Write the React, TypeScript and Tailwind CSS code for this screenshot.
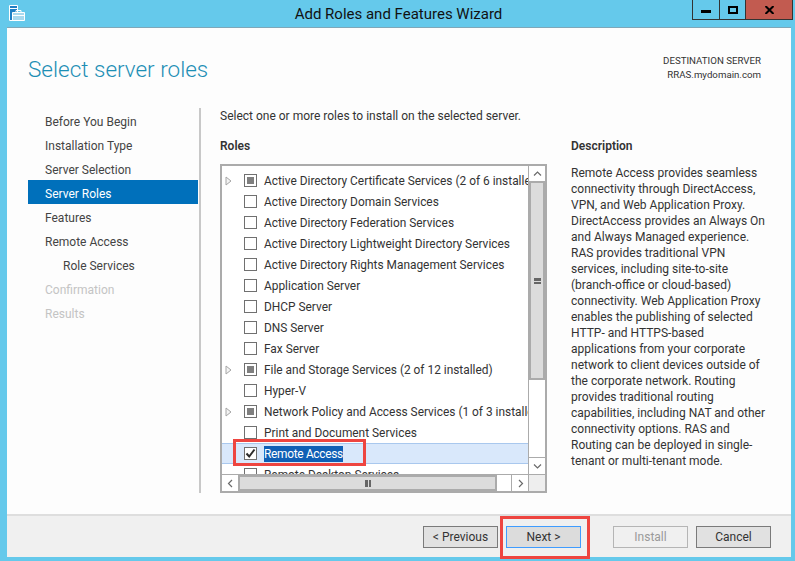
import { ReactNode } from "react"

const steps = [
  { label: "Before You Begin" },
  { label: "Installation Type" },
  { label: "Server Selection" },
  { label: "Server Roles", active: true },
  { label: "Features" },
  { label: "Remote Access" },
  { label: "Role Services", sub: true },
  { label: "Confirmation", off: true },
  { label: "Results", off: true },
]

const roles = [
  { label: "Active Directory Certificate Services (2 of 6 installed)", part: true },
  { label: "Active Directory Domain Services" },
  { label: "Active Directory Federation Services" },
  { label: "Active Directory Lightweight Directory Services" },
  { label: "Active Directory Rights Management Services" },
  { label: "Application Server" },
  { label: "DHCP Server" },
  { label: "DNS Server" },
  { label: "Fax Server" },
  { label: "File and Storage Services (2 of 12 installed)", part: true },
  { label: "Hyper-V" },
  { label: "Network Policy and Access Services (1 of 3 installed)", part: true },
  { label: "Print and Document Services" },
  { label: "Remote Access", on: true },
  { label: "Remote Desktop Services" },
]

const description = [
  "Remote Access provides seamless",
  "connectivity through DirectAccess,",
  "VPN, and Web Application Proxy.",
  "DirectAccess provides an Always On",
  "and Always Managed experience.",
  "RAS provides traditional VPN",
  "services, including site-to-site",
  "(branch-office or cloud-based)",
  "connectivity. Web Application Proxy",
  "enables the publishing of selected",
  "HTTP- and HTTPS-based",
  "applications from your corporate",
  "network to client devices outside of",
  "the corporate network. Routing",
  "provides traditional routing",
  "capabilities, including NAT and other",
  "connectivity options. RAS and",
  "Routing can be deployed in single-",
  "tenant or multi-tenant mode.",
]

function Chevron({ d }: { d: string }) {
  return (
    <svg width="9" height="9" viewBox="0 0 9 9" fill="none" stroke="#6a6a6a" strokeWidth="1.2">
      <path d={d} />
    </svg>
  )
}

function ScrollButton({ d, className }: { d: string; className: string }) {
  return (
    <div className={`flex items-center justify-center shrink-0 bg-white ${className}`}>
      <Chevron d={d} />
    </div>
  )
}

function Button({ children, className }: { children: ReactNode; className: string }) {
  return (
    <div className={`flex items-center justify-center h-[22px] w-[75px] border text-[12px] ${className}`}>
      {children}
    </div>
  )
}

function Row({ role }: { role: (typeof roles)[number] }) {
  return (
    <div
      className={`flex items-center h-[21px] shrink-0 ${
        role.on ? "bg-[#d9e8fb] border-y border-[#a9c8ee]" : ""
      }`}
    >
      <div className="flex items-center w-[22px] pl-[3px] shrink-0">
        {role.part && (
          <svg width="7" height="10" viewBox="0 0 7 10" fill="#f4f4f4" stroke="#a6a6a6">
            <path d="M1 1 L6 5 L1 9 Z" />
          </svg>
        )}
      </div>
      <div className="flex items-center justify-center w-[13px] h-[13px] border border-[#707070] bg-white shrink-0">
        {role.part && <div className="w-[7px] h-[7px] bg-[#7f7f7f]" />}
        {role.on && (
          <svg width="11" height="11" viewBox="0 0 11 11" fill="none" stroke="#2b2b2b" strokeWidth="2">
            <path d="M1.5 5.5 L4.2 8.5 L9.5 1.5" />
          </svg>
        )}
      </div>
      <span
        className={`ml-[7px] whitespace-nowrap text-[11.9px] leading-[16px] ${
          role.on ? "bg-[#0f5fb5] text-white tracking-[-0.3px]" : "text-[#333]"
        }`}
      >
        {role.label}
      </span>
    </div>
  )
}

export default function App() {
  return (
    <div
      className="relative flex flex-col w-[795px] h-[561px] bg-[#65c9eb] text-[#333] overflow-hidden"
      style={{ fontFamily: "Roboto, 'Open Sans', sans-serif" }}
    >
      {/* title bar */}
      <div className="relative flex items-start justify-center h-[28px] shrink-0 pl-[2px]">
        <svg className="absolute left-[9px] top-[5px]" width="16" height="16" viewBox="0 0 16 16" fill="none">
          <path d="M0.5 0.5 H8.5 V15.5 H0.5 Z" fill="#1f7fc4" stroke="#fff" />
          <path d="M1 3.5 H8" stroke="#fff" />
          <path d="M3.5 7.5 H15.5 V15.5 H3.5 Z" fill="#a9d9ee" stroke="#fff" />
          <path d="M7 7 V5.5 H12 V7 M3.5 10.5 H15.5" stroke="#fff" />
        </svg>
        <span className="mt-[5px] text-[15px] leading-[18px] text-[#111]">Add Roles and Features Wizard</span>
        <div className="absolute right-[2px] top-0 flex h-[20px] border border-t-0 border-[#333]">
          <div className="flex items-center justify-center w-[27px] border-r border-[#333]">
            <div className="w-[10px] h-[3px] mt-[4px] bg-black" />
          </div>
          <div className="flex items-center justify-center w-[26px] border-r border-[#333]">
            <div className="w-[10px] h-[8px] border-2 border-black" />
          </div>
          <div className="flex items-center justify-center w-[46px] bg-[#c25b50]">
            <svg width="9" height="8" viewBox="0 0 9 8" stroke="#000" strokeWidth="2">
              <path d="M0.5 0 L8.5 8 M8.5 0 L0.5 8" />
            </svg>
          </div>
        </div>
      </div>

      {/* window body */}
      <div className="flex flex-col flex-1 ml-[7px] mr-[4px] mb-[4px] bg-[#fdfdfd] shadow-[0_-1px_0_#7fa7b8]">
        {/* header */}
        <div className="flex justify-between h-[80px] shrink-0 pl-[21px] pr-[30px]">
          <h1 className="mt-[25px] text-[22.5px] leading-[32px] font-light text-[#1d8fb5]">Select server roles</h1>
          <div className="mt-[26px] text-right text-[9.7px] leading-[14px]">
            <div>DESTINATION SERVER</div>
            <div>RRAS.mydomain.com</div>
          </div>
        </div>

        <div className="flex flex-1 min-h-0 pl-[21px]">
          {/* steps */}
          <div className="flex flex-col w-[170px] shrink-0">
            {steps.map((s) => (
              <div
                key={s.label}
                className={`flex items-center h-[24px] pt-[4px] text-[12px] ${s.sub ? "pl-[35px]" : "pl-[17px]"} ${
                  s.active ? "bg-[#0070bb] text-white" : s.off ? "text-[#c4c4c4]" : "text-[#444]"
                }`}
              >
                {s.label}
              </div>
            ))}
          </div>

          <div className="w-[2px] h-[385px] ml-[1px] bg-[#c8c8c8] shrink-0" />

          {/* main */}
          <div className="flex flex-col ml-[19px] flex-1 min-w-0">
            <p className="text-[12px] leading-[16px]">Select one or more roles to install on the selected server.</p>
            <div className="flex mt-[14px] flex-1">
              <div className="flex flex-col w-[327px] shrink-0">
                <div className="h-[16px] text-[12px] leading-[16px] font-semibold">Roles</div>
                <div className="flex flex-col w-[327px] h-[329px] mt-[10px] border-2 border-[#ababab] bg-white">
                  <div className="flex flex-1 min-h-0">
                    <div className="flex flex-col flex-1 min-w-0 overflow-hidden pt-[4px]">
                      {roles.map((r) => (
                        <Row key={r.label} role={r} />
                      ))}
                    </div>
                    {/* vertical scrollbar */}
                    <div className="flex flex-col w-[17px] shrink-0 bg-white border-l border-[#ababab]">
                      <ScrollButton d="M1 6.5 L4.5 3 L8 6.5" className="h-[15px]" />
                      <div className="flex items-center justify-center h-[199px] border-2 border-[#ababab] bg-[#dcdcdc]">
                        <div className="w-[7px] h-[6px] border-y-2 border-[#666] flex items-center">
                          <div className="w-full h-[1px] bg-[#666]" />
                        </div>
                      </div>
                      <div className="flex-1" />
                      <ScrollButton d="M1 2.5 L4.5 6 L8 2.5" className="h-[17px] border-t border-[#ababab]" />
                    </div>
                  </div>
                  {/* horizontal scrollbar */}
                  <div className="flex h-[17px] shrink-0 bg-white border-t border-[#ababab]">
                    <ScrollButton d="M6 1 L2.5 4.5 L6 8" className="w-[16px]" />
                    <div className="flex items-center justify-center w-[259px] border-2 border-[#ababab] bg-[#dcdcdc]">
                      <div className="w-[6px] h-[7px] border-x-2 border-[#666] flex justify-center">
                        <div className="h-full w-[1px] bg-[#666]" />
                      </div>
                    </div>
                    <div className="flex-1" />
                    <ScrollButton d="M3 1 L6.5 4.5 L3 8" className="w-[17px] border-l border-[#ababab]" />
                    <div className="w-[17px] shrink-0 bg-[#eeeeee] border-l border-[#ababab]" />
                  </div>
                </div>
              </div>
              {/* description */}
              <div className="ml-[24px] w-[200px]">
                <div className="h-[16px] text-[12px] leading-[16px] font-semibold">Description</div>
                <div className="mt-[11px] text-[12px] leading-[16px]">
                  {description.map((l) => (
                    <div key={l} className="whitespace-nowrap">{l}</div>
                  ))}
                </div>
              </div>
            </div>
          </div>
        </div>

        {/* footer */}
        <div className="flex items-center justify-end h-[43px] shrink-0 pr-[20px] border-t-2 border-[#dedede] bg-[#f0f0f0]">
          <Button className="border-[#7a7a7a] bg-[#e1e1e1]">&lt; Previous</Button>
          <Button className="ml-[8px] border-[#3f9cff] bg-[#dcdcdc]">Next &gt;</Button>
          <Button className="ml-[32px] border-[#b5b5b5] bg-[#f0f0f0] text-[#9a9a9a]">Install</Button>
          <Button className="ml-[8px] border-[#7a7a7a] bg-[#e1e1e1]">Cancel</Button>
        </div>
      </div>

      {/* red annotation boxes */}
      <div className="absolute left-[233px] top-[439px] w-[133px] h-[27px] border-[3px] border-[#ee4540]" />
      <div className="absolute left-[500px] top-[516px] w-[90px] h-[43px] border-[3px] border-[#ee4540]" />
    </div>
  )
}
